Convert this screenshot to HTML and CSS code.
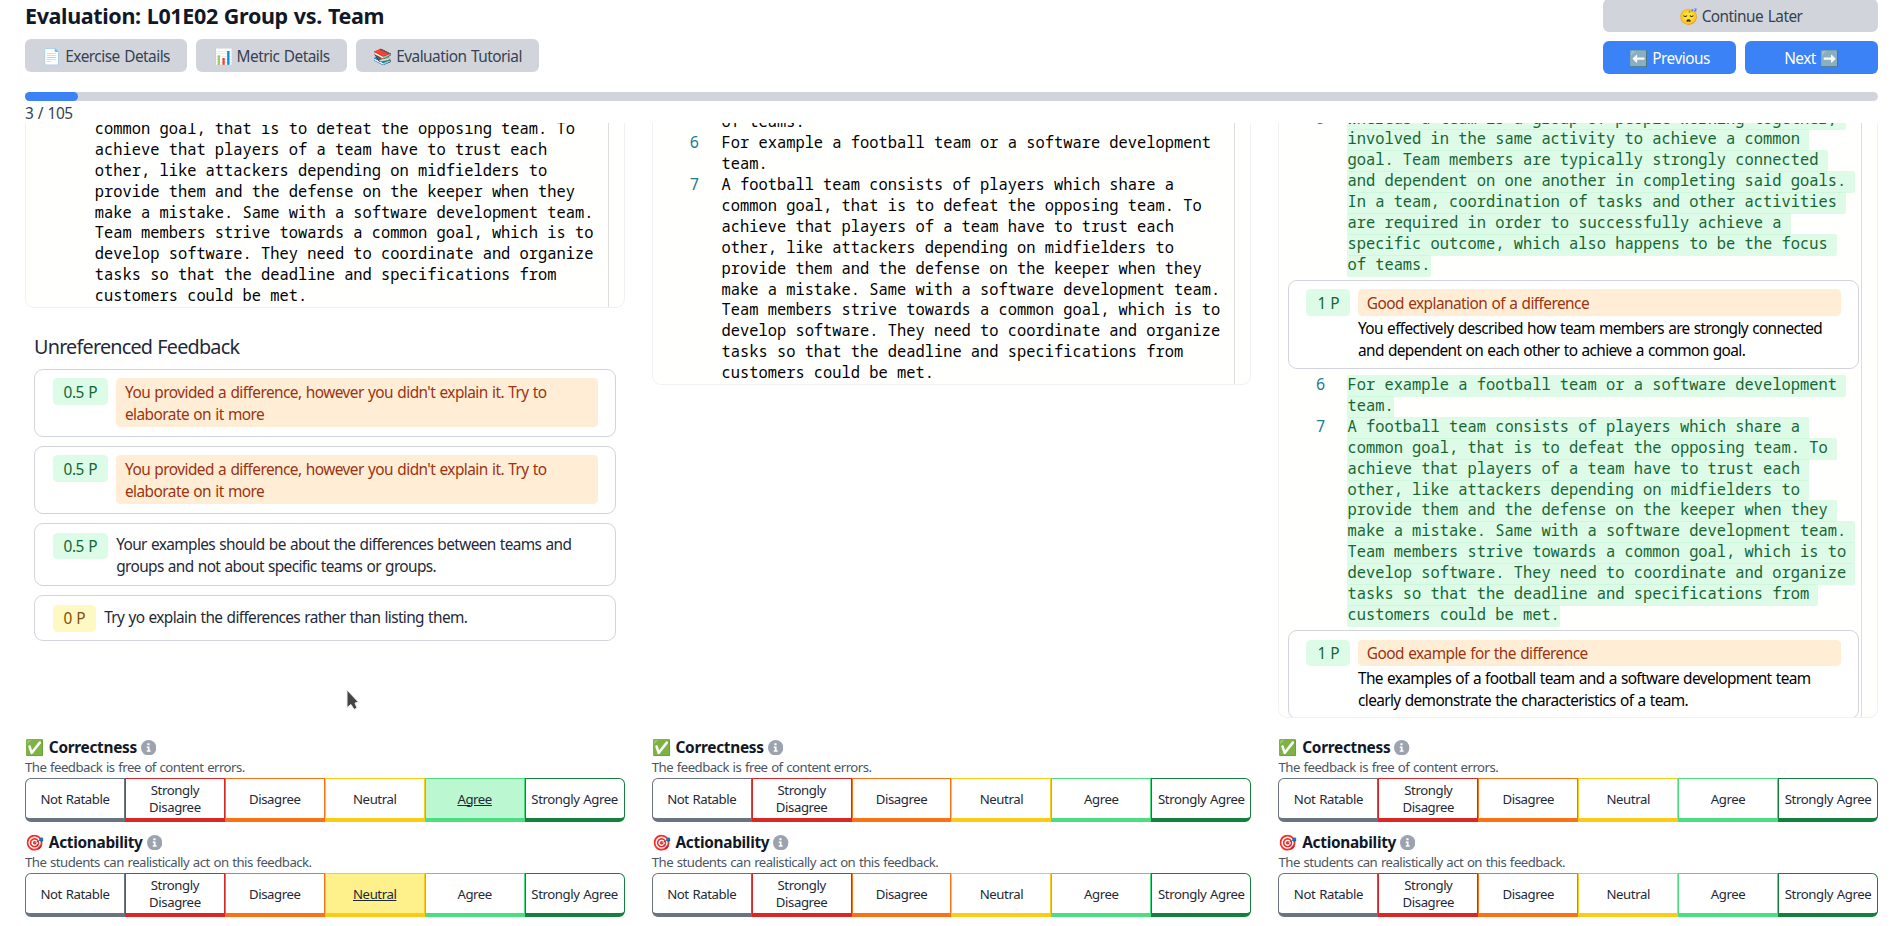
FILE: index.html
```
<!DOCTYPE html>
<html lang="en">
<head>
<meta charset="utf-8">
<title>Evaluation: L01E02 Group vs. Team</title>
<link rel="stylesheet" href="styles.css">
</head>
<body>
<header class="header">
  <div class="header-left">
    <h1 class="title">Evaluation: L01E02 Group vs. Team</h1>
    <div class="actions">
      <button class="btn">📄 Exercise Details</button>
      <button class="btn">📊 Metric Details</button>
      <button class="btn">📚 Evaluation Tutorial</button>
    </div>
  </div>
  <div class="header-right">
    <button class="btn wide">😴 Continue Later</button>
    <button class="btn primary">⬅️ Previous</button>
    <button class="btn primary">Next ➡️</button>
  </div>
</header>
<div class="progress"><div class="progress-fill"></div></div>
<div class="count">3 / 105</div>
<main class="columns" id="columns"></main>
<svg class="cursor" width="16" height="24" viewBox="0 0 16 24"><path d="M1 1V18.5L5 15.5L8 20.500L11 19L9 14L12.500 13.200Z" fill="#444" stroke="#eee" stroke-width="1"/></svg>
<script src="app.js"></script>
</body>
</html>
```
FILE: app.js
```
const team = [
  "common goal, that is to defeat the opposing team. To ",
  "achieve that players of a team have to trust each ",
  "other, like attackers depending on midfielders to ",
  "provide them and the defense on the keeper when they ",
  "make a mistake. Same with a software development team. ",
  "Team members strive towards a common goal, which is to ",
  "develop software. They need to coordinate and organize ",
  "tasks so that the deadline and specifications from ",
  "customers could be met."
];
const example = ["For example a football team or a software development ", "team."];
const consists = "A football team consists of players which share a ";
const whereas = [
  "whereas a team is a group of people working together, ",
  "involved in the same activity to achieve a common ",
  "goal. Team members are typically strongly connected ",
  "and dependent on one another in completing said goals. ",
  "In a team, coordination of tasks and other activities ",
  "are required in order to successfully achieve a ",
  "specific outcome, which also happens to be the focus ",
  "of teams."
];

const block = (num, lines, mark) => lines.map((t, i) =>
  `<div class="line"><span class="num">${i === 0 ? num : ""}</span><span class="${mark ? "mark" : "code"}">${t}</span></div>`).join("");

const card = (points, title, text, tone) =>
  `<div class="card"><span class="pill ${tone || ""}">${points} P</span><div class="card-body">` +
  (title ? `<div class="tag">${title}</div>` : "") + (text ? `<div class="text">${text}</div>` : "") + `</div></div>`;

const scale = [["Not Ratable", "gray"], ["Strongly Disagree", "red"], ["Disagree", "orange"],
  ["Neutral", "yellow"], ["Agree", "green"], ["Strongly Agree", "dark"]];
const info = `<svg class="info" viewBox="0 0 16 16"><circle cx="8" cy="8" r="8" fill="#9ca3af"/><path d="M6.600 3.500h2.300v2H6.600zM6 6.700h2.900v4H10v1.600H6v-1.600h1.100V8.300H6z" fill="#fff"/></svg>`;
const metric = (icon, name, sub, picked) =>
  `<section class="metric"><h3 class="metric-title"><span>${icon} ${name}</span>${info}</h3><p class="metric-sub">${sub}</p><div class="scale">` +
  scale.map(([label, c]) => `<div class="cell ${c}${label === picked ? " picked" : ""}">${label}</div>`).join("") + `</div></section>`;
const ratings = (a, b) => `<div class="ratings">` +
  metric("✅", "Correctness", "The feedback is free of content errors.", a) +
  metric("🎯", "Actionability", "The students can realistically act on this feedback.", b) + `</div>`;

const tryMore = "You provided a difference, however you didn't explain it. Try to<br>elaborate on it more";
const first = `<div class="panel short">${block("", team)}</div>
  <div class="feedback"><h2 class="feedback-title">Unreferenced Feedback</h2>
  ${card("0.5", tryMore)}${card("0.5", tryMore)}
  ${card("0.5", "", "Your examples should be about the differences between teams and<br>groups and not about specific teams or groups.")}
  ${card("0", "", "Try yo explain the differences rather than listing them.", "zero")}</div>`;
const second = `<div class="panel medium">${block("", ["of teams."])}${block(6, example)}${block(7, [consists, ...team])}</div>`;
const third = `<div class="panel tall"><div class="scrolled">${block(5, whereas, true)}
  ${card("1", "Good explanation of a difference", "You effectively described how team members are strongly connected<br>and dependent on each other to achieve a common goal.")}
  ${block(6, example, true)}${block(7, [consists, ...team], true)}
  ${card("1", "Good example for the difference", "The examples of a football team and a software development team<br>clearly demonstrate the characteristics of a team.")}</div></div>`;

document.getElementById("columns").innerHTML = [[first, "Agree", "Neutral"], [second], [third]]
  .map(([html, a, b]) => `<div class="column"><div class="view">${html}</div>${ratings(a, b)}</div>`).join("");
```
FILE: styles.css
```
* { box-sizing: border-box; }
body {
  margin: 0;
  height: 926px;
  overflow: hidden;
  padding: 0 25px;
  background: #fff;
  color: #1f2937;
  font: 15.4px/22px "Noto Sans", sans-serif;
  letter-spacing: -.62px;
  word-spacing: .8px;
}
h1, h2, h3, p { margin: 0; }
.header { display: flex; justify-content: space-between; height: 92px; }
.title { font-size: 21.5px; line-height: 31px; font-weight: 700; letter-spacing: -.36px; color: #111827; white-space: nowrap; }
.actions { display: flex; gap: 9px; margin-top: 8px; }
.btn {
  height: 33px;
  padding: 2px 17.3px 0;
  border: 0;
  border-radius: 6px;
  background: #d1d5db;
  color: #374151;
  font: 15.4px/22px "Noto Sans", sans-serif;
  letter-spacing: -.53px;
  word-spacing: 1.1px;
  white-space: nowrap;
}
.header-right {
  display: grid;
  grid-template-columns: 133px 133px;
  grid-auto-rows: 33px;
  gap: 9px;
  margin-top: -1px;
}
.wide { grid-column: 1 / 3; }
.primary { background: #3b82f6; color: #fff; }
.progress { height: 9px; border-radius: 5px; background: #d1d5db; }
.progress-fill { width: 53px; height: 9px; border-radius: 5px; background: #3b82f6; }
.count { height: 22px; line-height: 25px; letter-spacing: -.4px; color: #374151; }
.columns { display: grid; grid-template-columns: repeat(3, 1fr); gap: 27.2px; }
.column { min-width: 0; }
.view { height: 595px; overflow: hidden; }
.panel {
  display: flex;
  flex-direction: column;
  justify-content: flex-end;
  overflow: hidden;
  border: 1px solid #f0f1f2;
  border-top: 0;
  border-radius: 0 0 9px 9px;
  background: linear-gradient(#ddd, #ddd) right 15px top / 1px 100% no-repeat #fffffe;
}
.short { height: 185px; }
.medium { height: 262px; }
.tall { height: 595px; justify-content: flex-start; }
.scrolled { margin-top: -14.500px; padding: 0 18.500px 0 9px; }
.line {
  display: flex;
  flex: none;
  height: 20.9px;
  font: 15.4px/20.9px "Noto Sans Mono", "DejaVu Sans Mono", monospace;
  letter-spacing: 0;
  word-spacing: 0;
  color: #000;
  white-space: pre;
}
.num { width: 68.800px; padding-left: 37px; color: #237893; flex: none; }
.scrolled .num { width: 59px; padding-left: 27.500px; }
.mark { height: 21.900px; border-radius: 2px; background: rgba(187, 247, 208, .5); color: #166534; }
.feedback { display: flex; flex-direction: column; gap: 9.1px; padding: 23.500px 9px 0; }
.feedback-title { font-size: 19.8px; line-height: 29px; font-weight: 400; letter-spacing: -.78px; margin-bottom: -1px; }
.card {
  display: flex;
  align-items: flex-start;
  gap: 8.4px;
  padding: 8.8px 17px 8.8px 17.6px;
  border: 1px solid #d1d5db;
  border-radius: 9px;
  background: #fff;
  white-space: nowrap;
}
.scrolled .card { margin: 4px 0 6px; color: #000; height: 89.500px; padding-left: 17px; }
.pill { padding: 3.2px 10.600px 1.2px 11px; letter-spacing: -.45px; border-radius: 4.4px; background: #dcfce7; color: #166534; }
.zero { background: #fef9c3; color: #854d0e; }
.card-body { flex: 1; min-width: 0; }
.text { padding-top: 1.5px; margin-bottom: -1.5px; }
.tag + .text { padding-top: 2px; }
.tag { padding: 3.2px 8.8px 1.2px; border-radius: 4.4px; letter-spacing: -.55px; background: #ffedd5; color: #9a3412; }
.ratings { padding-top: 18px; }
.metric { height: 95px; }
.metric-title { display: flex; align-items: center; gap: 4px; height: 22px; padding-top: 1px; font-size: 15.4px; line-height: 22px; font-weight: 700; letter-spacing: -.3px; word-spacing: 1.4px; color: #111827; white-space: pre; }
.info { width: 15.400px; height: 15.400px; }
.metric-sub { height: 20px; font-size: 13.2px; line-height: 19px; letter-spacing: -.53px; color: #4b5563; }
.scale { display: flex; height: 44px; }
.cell {
  flex: 1 1 0;
  display: flex;
  align-items: center;
  justify-content: center;
  text-align: center;
  border: 1px solid;
  border-bottom-width: 4px;
  padding-top: 1px;
  font-size: 13.2px;
  line-height: 17px;
  letter-spacing: -.42px;
  color: #1f2937;
}
.cell:first-child { border-radius: 6px 0 0 6px; }
.cell:last-child { border-radius: 0 6px 6px 0; white-space: nowrap; }
.gray { border-color: #6b7280; }
.red { border-color: #dc2626; }
.orange { border-color: #f97316; }
.yellow { border-color: #facc15; }
.green { border-color: #4ade80; }
.dark { border-color: #15803d; }
.picked { text-decoration: underline; }
.green.picked { background: #bbf7d0; }
.yellow.picked { background: #fef08a; }
.cursor { position: absolute; left: 346px; top: 689px; }
```
